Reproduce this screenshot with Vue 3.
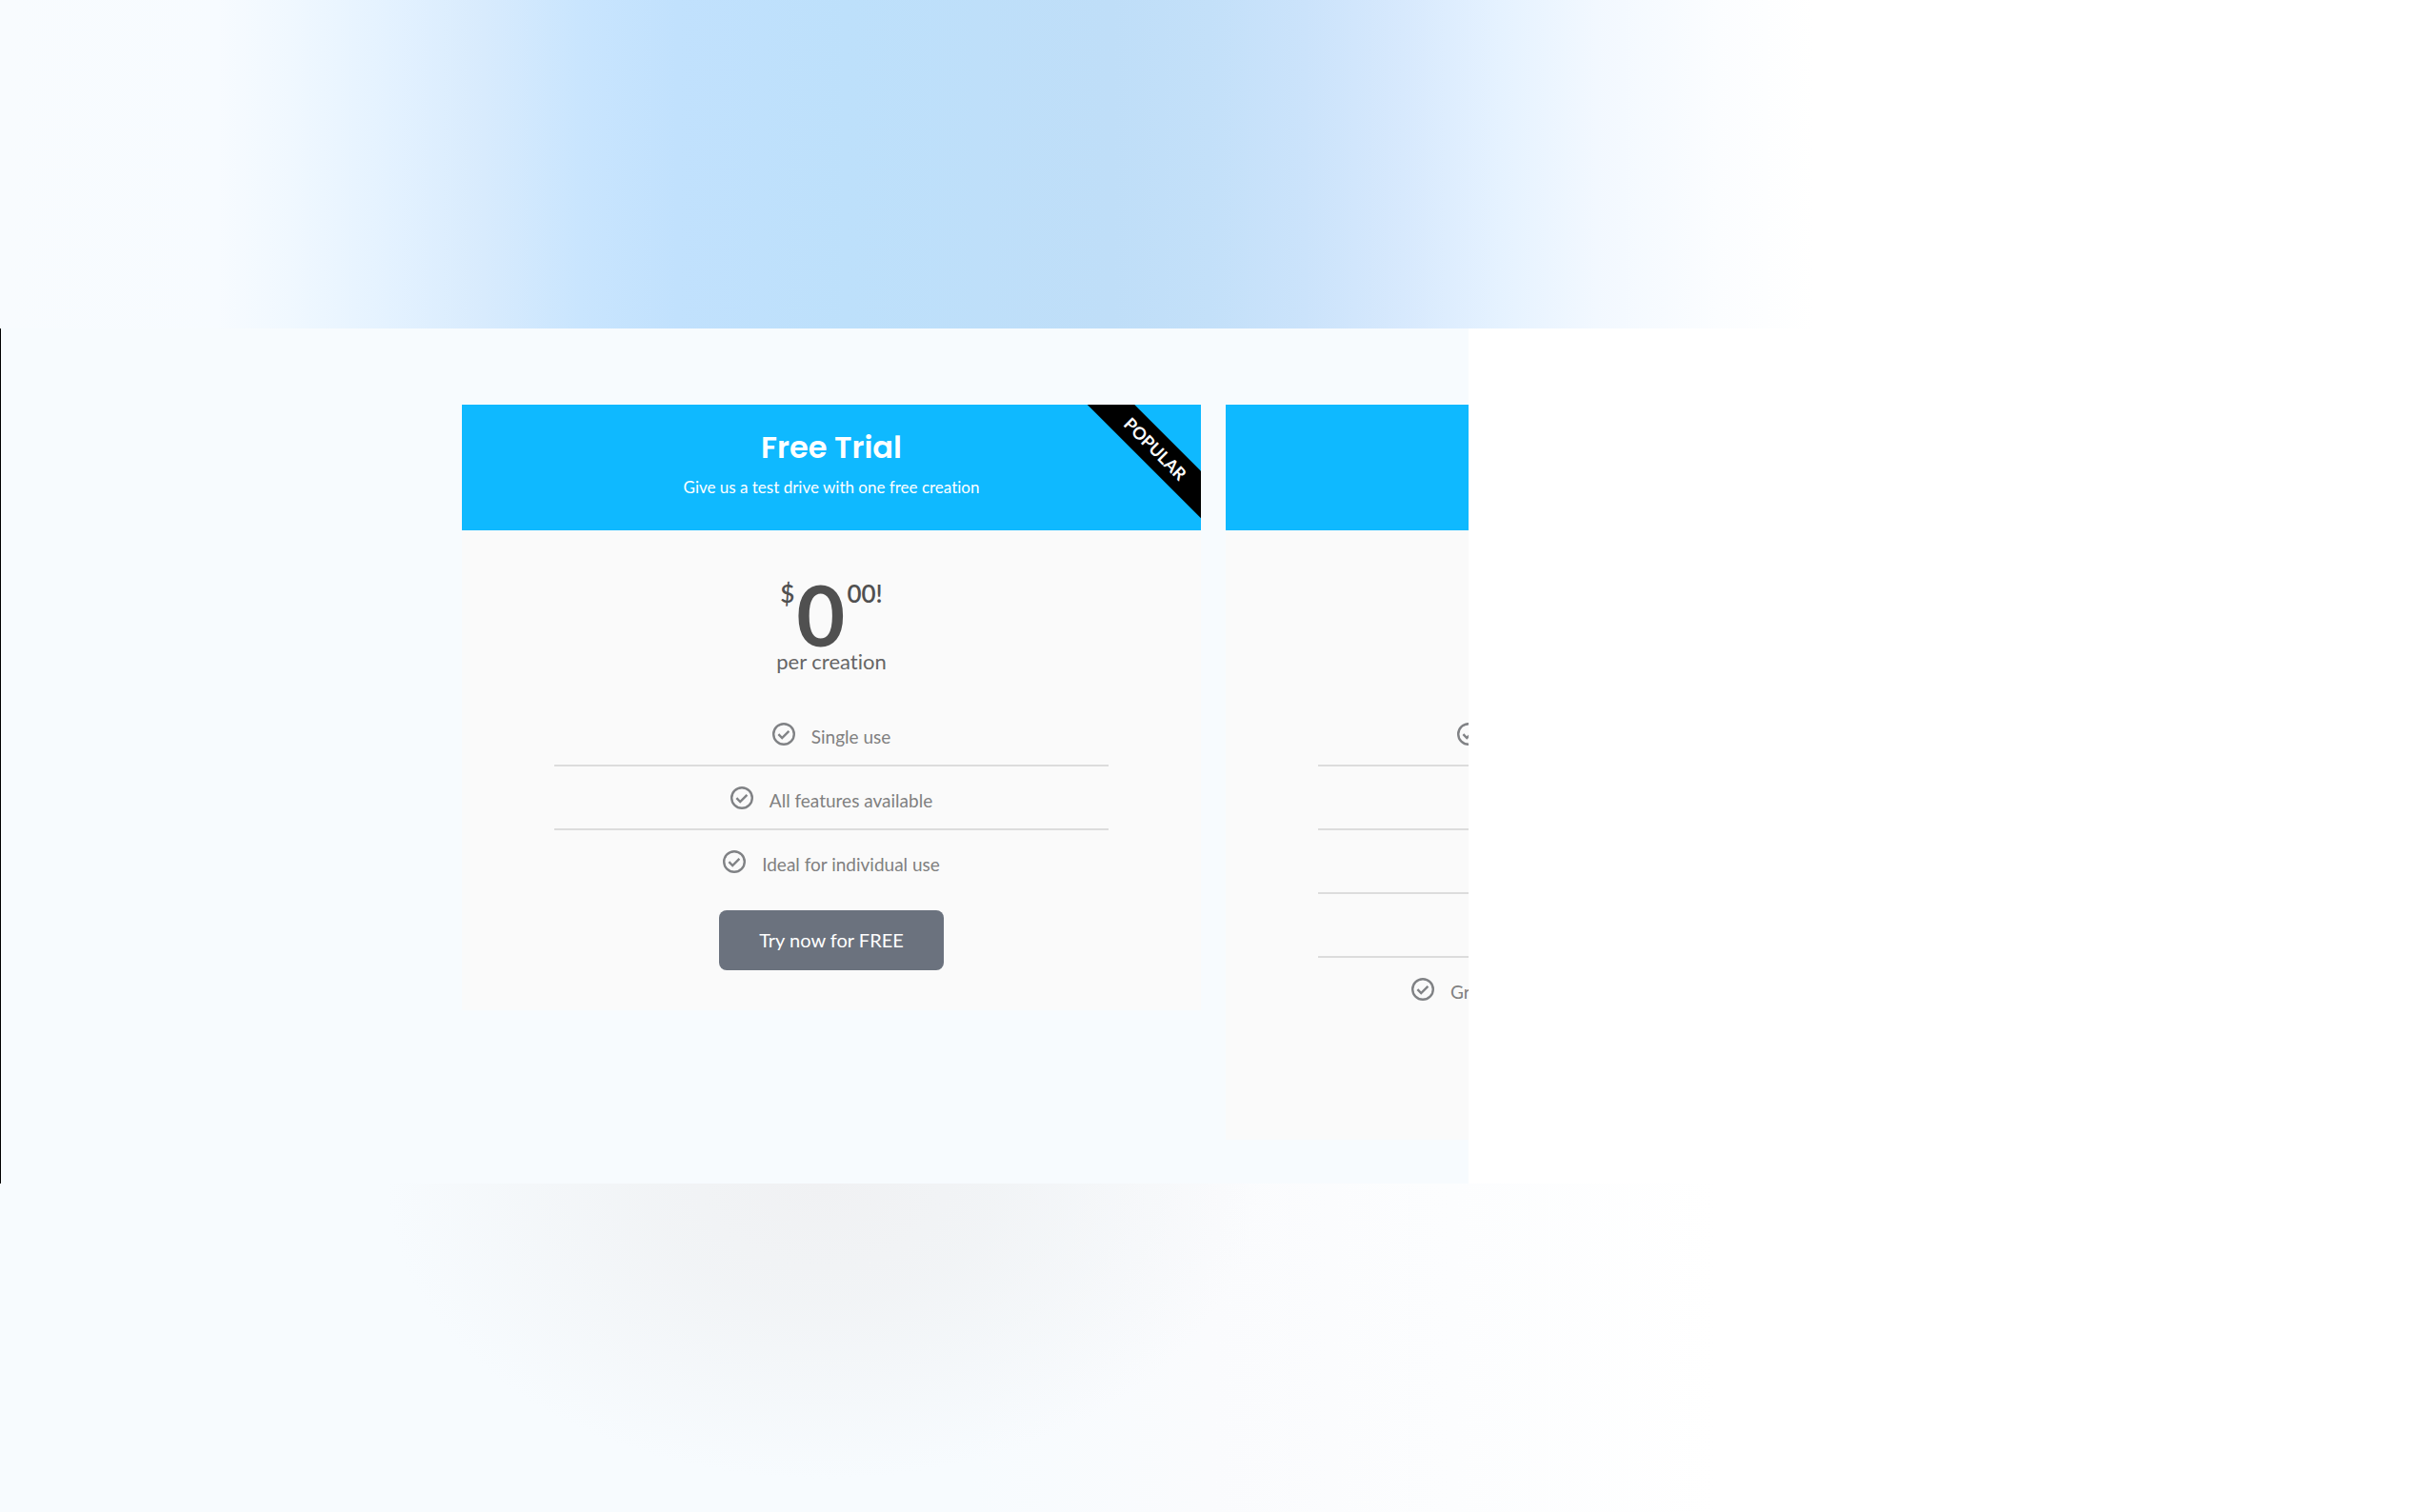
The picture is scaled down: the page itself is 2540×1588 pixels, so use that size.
<template>
  <div class="page">
    <div class="band band-top"></div>

    <main class="pricing">
      <!-- Free plan -->
      <section class="card">
        <header class="card-header">
          <h2>Free Trial</h2>
          <p>Give us a test drive with one free creation</p>
          <span class="ribbon">POPULAR</span>
        </header>
        <div class="card-body">
          <div class="price">
            <span class="currency">$</span>
            <span class="amount">0</span>
            <span class="cents">00!</span>
          </div>
          <p class="period">per creation</p>
          <ul class="features">
            <li v-for="feature in features" :key="feature">
              <svg class="check" viewBox="0 0 24 24" aria-hidden="true">
                <circle cx="12" cy="12" r="10.8" />
                <path d="M6.4 12.2l3.8 3.8 7.2-7.2" />
              </svg>
              <span>{{ feature }}</span>
            </li>
          </ul>
          <button type="button" class="cta">Try now for FREE</button>
        </div>
      </section>

      <!-- Next plan, cut off by the panel edge -->
      <section class="card card-next">
        <header class="card-header"></header>
        <div class="card-body">
          <ul class="features">
            <li class="first">
              <svg class="check" viewBox="0 0 24 24" aria-hidden="true">
                <circle cx="12" cy="12" r="10.8" />
                <path d="M6.4 12.2l3.8 3.8 7.2-7.2" />
              </svg>
            </li>
            <li></li>
            <li></li>
            <li></li>
            <li class="last">
              <svg class="check" viewBox="0 0 24 24" aria-hidden="true">
                <circle cx="12" cy="12" r="10.8" />
                <path d="M6.4 12.2l3.8 3.8 7.2-7.2" />
              </svg>
              <span>Gr</span>
            </li>
          </ul>
        </div>
      </section>
    </main>

    <div class="band band-bottom"></div>
  </div>
</template>

<script setup>
const features = [
  'Single use',
  'All features available',
  'Ideal for individual use'
]
</script>

<style>
body {
  margin: 0;
  background: #fff;
}
</style>

<style scoped>
* {
  box-sizing: border-box;
}

.page {
  display: grid;
  grid-template-rows: 1fr auto 1fr;
  min-height: 100vh;
  font-family: Lato, sans-serif;
  font-variant-ligatures: none;
}

.band-top {
  background: linear-gradient(
    to right,
    #f8fbfe 0%,
    #f7fbff 9%,
    #f0f8ff 12%,
    #e4f2ff 16%,
    #d8ebfd 20%,
    #c9e5fe 24%,
    #c1e1fd 28%,
    #bde0fb 35%,
    #bfdef8 46%,
    #c3e0f9 50%,
    #cbe3fb 54%,
    #d7e9fd 58%,
    #e5f2ff 62%,
    #f2f8ff 66%,
    #fbfdff 71%,
    #fff 75%
  );
}

.band-bottom {
  background:
    radial-gradient(ellipse 18% 90% at 34% 0, #f0f1f3 0%, #f0f2f4cc 40%, #f3f6f800 100%),
    linear-gradient(to right, #f7fbfe 0%, #f7fbfe 40%, #fafbfd 50%, #fcfdfe 60%, #fff 71%);
}

.pricing {
  display: flex;
  align-items: flex-start;
  gap: 26px;
  width: 60.7%;
  padding: 80px 0 46px 484px;
  border-left: 1px solid #000;
  background: #f7fbfe;
  overflow: hidden;
}

.card {
  flex: 0 0 776px;
  background: #fafafa;
}

.card-next {
  flex: 1;
  min-width: 0;
  overflow: hidden;
}

.card-header {
  position: relative;
  height: 132px;
  padding-top: 23px;
  background: #0fb9ff;
  color: #fff;
  text-align: center;
  overflow: hidden;
}

.card-header h2 {
  margin: 0;
  font-family: Poppins, Inter, sans-serif;
  font-size: 32px;
  font-weight: 600;
  line-height: 44px;
}

.card-header p {
  margin: 7px 0 0;
  font-size: 17px;
  line-height: 26px;
}

.ribbon {
  position: absolute;
  top: 29px;
  right: -42px;
  width: 180px;
  background: #000;
  font-size: 18px;
  font-weight: 700;
  line-height: 35px;
  transform: rotate(45deg);
}

.card-body {
  display: flex;
  flex-direction: column;
  align-items: center;
  padding: 48px 0 42px;
}

.price {
  display: flex;
  gap: 2px;
  color: #505050;
}

.currency,
.cents {
  font-size: 26px;
  font-weight: 600;
  line-height: 36px;
}

.amount {
  font-size: 88px;
  font-weight: 700;
  line-height: 80px;
}

.period {
  margin: 0;
  color: #666;
  font-size: 22px;
  line-height: 20px;
}

.features {
  width: 75%;
  margin: 33px 0 0;
  padding: 0;
  list-style: none;
}

.features li {
  display: flex;
  justify-content: center;
  gap: 17px;
  height: 67px;
  padding-top: 21px;
  border-bottom: 2px solid #dcdcdc;
  color: #808080;
  font-size: 19px;
  line-height: 29px;
}

.features li:last-child {
  border-bottom: none;
}

.check {
  flex: none;
  width: 24px;
  height: 24px;
  fill: none;
  stroke: #808285;
  stroke-width: 2.4;
}

.cta {
  margin-top: 17px;
  padding: 0 42px;
  border: none;
  border-radius: 8px;
  background: #6b727e;
  color: #fff;
  font-family: inherit;
  font-size: 20px;
  line-height: 63px;
}

.card-next .card-body {
  align-items: stretch;
  padding: 181px 0 124px 97px;
}

.card-next .features {
  width: 100%;
  margin: 0;
}

.card-next .features li {
  justify-content: flex-start;
}

.card-next .first {
  padding-left: 146px;
}

.card-next .last {
  padding-left: 98px;
}
</style>
